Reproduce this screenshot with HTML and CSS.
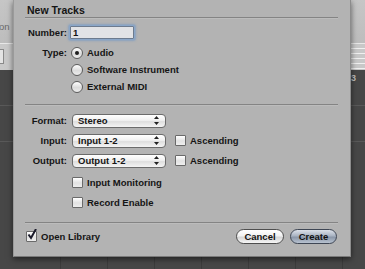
FILE: index.html
```html
<!DOCTYPE html>
<html lang="en">
<head>
    <meta charset="UTF-8">
    <meta name="viewport" content="width=device-width, initial-scale=1.0">
    <title>New Tracks</title>
    <link rel="stylesheet" href="styles.css">
</head>
<body>
    <div class="app">
        <div class="toolbar">
            <span class="toolbar-label">on</span>
        </div>
        <div class="ruler">
            <div class="field-edge"></div>
        </div>
        <div class="tracks">
            <span class="bar-num">3</span>
            <div class="track-line first"></div>
            <div class="track-line"></div>
        </div>
    </div>

    <div class="sheet">
        <div class="title">New Tracks</div>
        <div class="sep"></div>

        <div class="section top-section">
            <div class="row">
                <span class="label">Number:</span>
                <div class="text-field">1</div>
            </div>
            <div class="row">
                <span class="label">Type:</span>
                <span class="radio checked"></span>
                <span class="opt">Audio</span>
            </div>
            <div class="row">
                <span class="label"></span>
                <span class="radio"></span>
                <span class="opt">Software Instrument</span>
            </div>
            <div class="row">
                <span class="label"></span>
                <span class="radio"></span>
                <span class="opt">External MIDI</span>
            </div>
        </div>

        <div class="sep"></div>

        <div class="section mid-section">
            <div class="row">
                <span class="label wide">Format:</span>
                <div class="popup"><span>Stereo</span><svg class="arrows" width="5" height="9" viewBox="0 0 5 9"><path d="M2.5 0 L5 3 L0 3 Z M0 6 L5 6 L2.5 9 Z" fill="#222"/></svg></div>
            </div>
            <div class="row">
                <span class="label wide">Input:</span>
                <div class="popup"><span>Input 1-2</span><svg class="arrows" width="5" height="9" viewBox="0 0 5 9"><path d="M2.5 0 L5 3 L0 3 Z M0 6 L5 6 L2.5 9 Z" fill="#222"/></svg></div>
                <span class="check side"></span>
                <span class="opt">Ascending</span>
            </div>
            <div class="row">
                <span class="label wide">Output:</span>
                <div class="popup"><span>Output 1-2</span><svg class="arrows" width="5" height="9" viewBox="0 0 5 9"><path d="M2.5 0 L5 3 L0 3 Z M0 6 L5 6 L2.5 9 Z" fill="#222"/></svg></div>
                <span class="check side"></span>
                <span class="opt">Ascending</span>
            </div>
            <div class="row gap-above">
                <span class="label wide"></span>
                <span class="check"></span>
                <span class="opt">Input Monitoring</span>
            </div>
            <div class="row">
                <span class="label wide"></span>
                <span class="check"></span>
                <span class="opt">Record Enable</span>
            </div>
        </div>

        <div class="sep"></div>

        <div class="footer">
            <span class="check checked"><svg width="10" height="11" viewBox="0 0 10 11"><path d="M1.5 5.5 L4 9 L9 0" fill="none" stroke="#1a1a2a" stroke-width="2"/></svg></span>
            <span class="opt">Open Library</span>
            <div class="spacer"></div>
            <button class="button cancel">Cancel</button>
            <button class="button create">Create</button>
        </div>
    </div>
</body>
</html>
```

FILE: styles.css
```css
body {
    margin: 0;
    padding: 0;
    width: 365px;
    height: 269px;
    overflow: hidden;
    background: #474747;
    font-family: 'Liberation Sans', Arial, sans-serif;
    font-weight: bold;
    color: #151515;
}

/* application behind the sheet */
.app {
    display: flex;
    flex-direction: column;
    height: 269px;
}

.toolbar {
    height: 43px;
    background: linear-gradient(#c6c6c6, #bdbdbd);
    border-bottom: 1px solid #e8e8e8;
    position: relative;
}

.toolbar-label {
    position: absolute;
    left: -1px;
    top: 21px;
    font-size: 9.5px;
    font-weight: normal;
    color: #6a6a6a;
}

.ruler {
    height: 26px;
    background: linear-gradient(90deg, #c9c9c9 0 350px, transparent 350px),
        repeating-linear-gradient(#c8c8c8 0 4px, #f0f0f0 4px 5px);
    position: relative;
}

.field-edge {
    position: absolute;
    left: -6px;
    top: 5px;
    width: 8px;
    height: 13px;
    background: #e4e4e4;
    border: 1px solid #8a8a8a;
}

.tracks {
    flex: 1;
    background: repeating-linear-gradient(90deg, #474747 0 46px, #3c3c3c 46px 47px);
    background-position: 14px 0;
    position: relative;
}

.bar-num {
    position: absolute;
    left: 351px;
    top: 3px;
    font-size: 9px;
    color: #bdbdbd;
}

.track-line {
    height: 1px;
    background: #595959;
    margin-top: 35px;
}

/* the sheet */
.sheet {
    position: absolute;
    left: 13px;
    top: 0;
    width: 336px;
    height: 256px;
    background: #b3b3b3;
    border-left: 1px solid #9a9a9a;
    border-right: 1px solid #8c8c8c;
    border-bottom: 1px solid #7a7a7a;
    box-shadow: 0 2px 6px rgba(0, 0, 0, 0.55);
}

.title {
    height: 17px;
    padding-left: 13px;
    font-size: 10.5px;
    line-height: 12px;
    padding-top: 4px;
    box-sizing: border-box;
}

.sep {
    height: 1px;
    margin: 0 12px 0 11px;
    background: #848484;
    border-bottom: 1px solid #bcbcbc;
}

.section {
    display: flex;
    flex-direction: column;
}

.top-section {
    padding-top: 5px;
    height: 80px;
}

.mid-section {
    padding-top: 6px;
    height: 110px;
}

.row {
    display: flex;
    align-items: center;
    height: 17px;
    font-size: 9.5px;
    margin-bottom: 3px;
}

.top-section .row + .row {
    margin-bottom: 0;
}

.gap-above {
    margin-top: 2px;
}

.label {
    width: 53px;
    text-align: right;
    padding-right: 3px;
    flex-shrink: 0;
}

.label.wide {
    width: 53px;
    padding-right: 5px;
}

.opt {
    margin-left: 4px;
}

.text-field {
    width: 58px;
    height: 11px;
    padding: 0 2px;
    font-size: 9.5px;
    line-height: 11px;
    background: #e2e3e6;
    border: 1px solid #6d7b8e;
    box-shadow: 0 0 0 1px #8aa6c8, 0 0 2px 2px rgba(110, 150, 200, 0.6);
    border-radius: 1px;
}

.radio {
    width: 10px;
    height: 10px;
    border-radius: 50%;
    border: 1px solid #5d5d5d;
    background: linear-gradient(#ffffff, #dcdcdc 55%, #ececec);
    margin-left: 1px;
    display: flex;
    align-items: center;
    justify-content: center;
}

.radio.checked::after {
    content: "";
    width: 4px;
    height: 4px;
    border-radius: 50%;
    background: #1e1e1e;
}

.popup {
    width: 84px;
    height: 12px;
    padding: 0 4px;
    border: 1px solid #6b6b6b;
    border-radius: 4px;
    background: linear-gradient(#ffffff, #f0f0f0 45%, #dedede 55%, #f4f4f4);
    display: flex;
    align-items: center;
    justify-content: space-between;
    font-size: 9.5px;
}

.popup span {
    padding-left: 1px;
}

.arrows {
    margin-right: 2px;
}

.check {
    width: 9px;
    height: 9px;
    border: 1px solid #6a6a6a;
    border-radius: 1px;
    background: linear-gradient(#ffffff, #e2e2e2 55%, #eeeeee);
    position: relative;
    flex-shrink: 0;
}

.check.side {
    margin-left: 9px;
}

.check svg {
    position: absolute;
    left: 0;
    top: -3px;
}

.footer {
    display: flex;
    align-items: center;
    height: 17px;
    margin-top: 4px;
    padding: 0 13px 0 12px;
    font-size: 9.5px;
}

.spacer {
    flex: 1;
}

.button {
    height: 15px;
    padding: 0;
    border-radius: 8px;
    font-family: 'Liberation Sans', Arial, sans-serif;
    font-weight: bold;
    font-size: 9.5px;
    line-height: 13px;
    color: #111;
    cursor: pointer;
}

.cancel {
    width: 48px;
    border: 1px solid #4e4e4e;
    background: linear-gradient(#ffffff, #f2f2f2 45%, #d6d6d6 55%, #f6f6f6);
    margin-right: 6px;
}

.create {
    width: 47px;
    border: 1px solid #3e4654;
    background: linear-gradient(#dde2ea, #a9b3c2 45%, #8a96a8 55%, #b8c2d0);
}
```
